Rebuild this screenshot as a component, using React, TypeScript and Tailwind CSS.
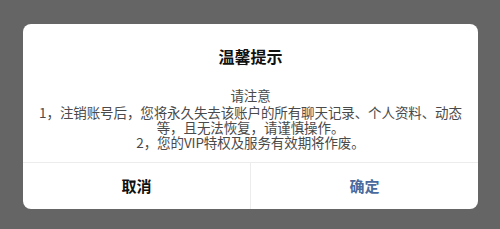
export default function App() {
  return (
    <div
      className="w-[500px] h-[229px] bg-[#656565] pt-[24px] px-[23px]"
      style={{ fontFamily: '"Noto Sans CJK SC", "Liberation Sans", sans-serif' }}
    >
      <div className="w-[455px] h-[185px] bg-white rounded-[8px] flex flex-col overflow-hidden">
        <div className="flex-1 flex flex-col items-center">
          <div className="mt-[20px] text-[16px] leading-[24px] font-bold text-[#111]">温馨提示</div>
          <div className="mt-[20px] text-center text-[13.5px] leading-[15px] text-[#4a4a4a] tracking-[-0.1px]">
            <div className="mb-[2px]">请注意</div>
            <div>1，注销账号后，您将永久失去该账户的所有聊天记录、个人资料、动态</div>
            <div>等，且无法恢复，请谨慎操作。</div>
            <div>2，您的VIP特权及服务有效期将作废。</div>
          </div>
        </div>
        <div className="h-[47px] border-t border-[#ececec] flex">
          <button className="flex-1 flex items-center justify-center text-[15px] font-bold text-[#111] border-r border-[#ececec]">
            取消
          </button>
          <button className="flex-1 flex items-center justify-center text-[15px] font-bold text-[#4b6b9e]">
            确定
          </button>
        </div>
      </div>
    </div>
  );
}
